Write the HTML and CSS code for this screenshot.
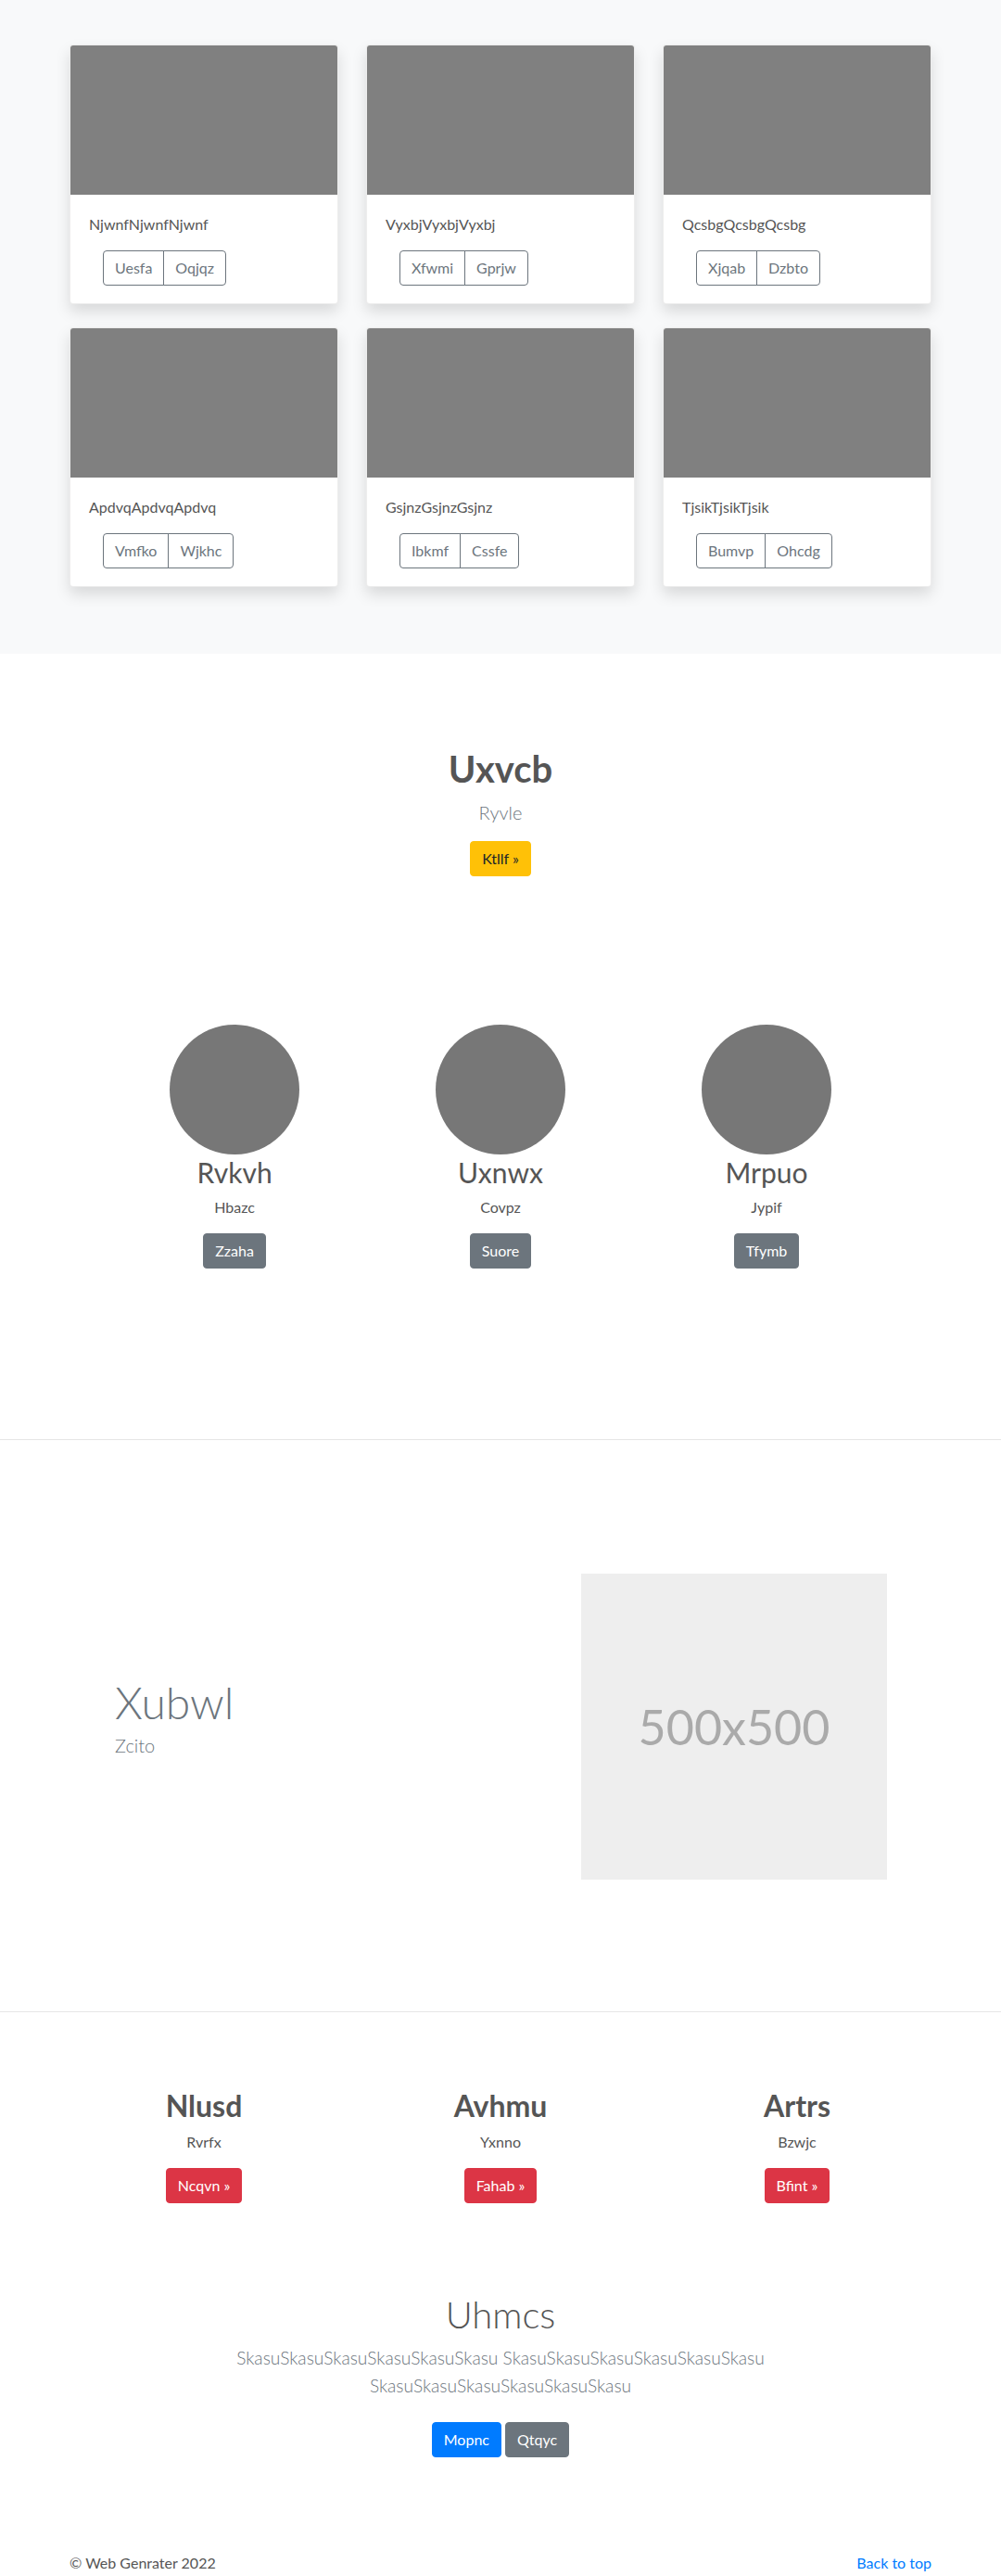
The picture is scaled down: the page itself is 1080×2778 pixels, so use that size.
FILE: index.html
```html
<!DOCTYPE html>
<html lang="en">
<head>
<meta charset="utf-8">
<title>Web Genrater</title>
<link rel="stylesheet" href="styles.css">
</head>
<body>
<section class="album">
  <div class="card-grid">
    <div class="card"><div class="card-img"></div><div class="card-body"><p class="card-text">NjwnfNjwnfNjwnf</p><div class="btn-group"><button class="btn-outline">Uesfa</button><button class="btn-outline">Oqjqz</button></div></div></div>
    <div class="card"><div class="card-img"></div><div class="card-body"><p class="card-text">VyxbjVyxbjVyxbj</p><div class="btn-group"><button class="btn-outline">Xfwmi</button><button class="btn-outline">Gprjw</button></div></div></div>
    <div class="card"><div class="card-img"></div><div class="card-body"><p class="card-text">QcsbgQcsbgQcsbg</p><div class="btn-group"><button class="btn-outline">Xjqab</button><button class="btn-outline">Dzbto</button></div></div></div>
    <div class="card"><div class="card-img"></div><div class="card-body"><p class="card-text">ApdvqApdvqApdvq</p><div class="btn-group"><button class="btn-outline">Vmfko</button><button class="btn-outline">Wjkhc</button></div></div></div>
    <div class="card"><div class="card-img"></div><div class="card-body"><p class="card-text">GsjnzGsjnzGsjnz</p><div class="btn-group"><button class="btn-outline">Ibkmf</button><button class="btn-outline">Cssfe</button></div></div></div>
    <div class="card"><div class="card-img"></div><div class="card-body"><p class="card-text">TjsikTjsikTjsik</p><div class="btn-group"><button class="btn-outline">Bumvp</button><button class="btn-outline">Ohcdg</button></div></div></div>
  </div>
</section>

<section class="feature">
  <h1 class="feature-title">Uxvcb</h1>
  <p class="feature-lead">Ryvle</p>
  <a class="btn btn-warning" href="#">Ktllf &raquo;</a>
</section>

<section class="team">
  <div class="team-grid">
    <div class="member"><div class="avatar"></div><h3 class="member-name">Rvkvh</h3><p class="member-role">Hbazc</p><a class="btn btn-secondary" href="#">Zzaha</a></div>
    <div class="member"><div class="avatar"></div><h3 class="member-name">Uxnwx</h3><p class="member-role">Covpz</p><a class="btn btn-secondary" href="#">Suore</a></div>
    <div class="member"><div class="avatar"></div><h3 class="member-name">Mrpuo</h3><p class="member-role">Jypif</p><a class="btn btn-secondary" href="#">Tfymb</a></div>
  </div>
</section>

<section class="split">
  <div class="split-inner">
    <div class="split-text">
      <h2 class="split-title">Xubwl</h2>
      <p class="split-lead">Zcito</p>
    </div>
    <div class="placeholder">500x500</div>
  </div>
</section>

<section class="trio">
  <div class="trio-grid">
    <div class="trio-item"><h2 class="trio-title">Nlusd</h2><p class="trio-text">Rvrfx</p><a class="btn btn-danger" href="#">Ncqvn &raquo;</a></div>
    <div class="trio-item"><h2 class="trio-title">Avhmu</h2><p class="trio-text">Yxnno</p><a class="btn btn-danger" href="#">Fahab &raquo;</a></div>
    <div class="trio-item"><h2 class="trio-title">Artrs</h2><p class="trio-text">Bzwjc</p><a class="btn btn-danger" href="#">Bfint &raquo;</a></div>
  </div>
</section>

<section class="jumbo">
  <div class="jumbo-inner">
    <h1 class="jumbo-title">Uhmcs</h1>
    <p class="jumbo-lead">SkasuSkasuSkasuSkasuSkasuSkasu SkasuSkasuSkasuSkasuSkasuSkasu SkasuSkasuSkasuSkasuSkasuSkasu</p>
    <div class="jumbo-actions"><a class="btn btn-primary" href="#">Mopnc</a> <a class="btn btn-secondary" href="#">Qtqyc</a></div>
  </div>
</section>

<footer class="footer">
  <div class="footer-inner">
    <p class="copy">&copy; Web Genrater 2022</p>
    <a class="top-link" href="#">Back to top</a>
  </div>
</footer>
</body>
</html>
```

FILE: styles.css
```css
* { box-sizing: border-box; }

html, body {
  margin: 0;
  padding: 0;
}

body {
  font-family: Lato, "Noto Sans", "Liberation Sans", sans-serif;
  font-size: 16px;
  line-height: 1.5;
  color: #555;
  background: #fff;
}

p { margin: 0; }
h1, h2, h3 { margin: 0; }

/* buttons */
.btn {
  display: inline-block;
  font-family: inherit;
  font-size: 16px;
  line-height: 24px;
  padding: 6px 12px;
  border: 1px solid transparent;
  border-radius: 4px;
  text-decoration: none;
  vertical-align: middle;
}
.btn-warning { background: #ffc107; border-color: #ffc107; color: #212529; }
.btn-secondary { background: #6c757d; border-color: #6c757d; color: #fff; }
.btn-danger { background: #dc3545; border-color: #dc3545; color: #fff; }
.btn-primary { background: #007bff; border-color: #007bff; color: #fff; }

/* album */
.album {
  background: #f8f9fa;
  padding: 48px 0 72px;
}
.card-grid {
  width: 930px;
  margin: 0 auto;
  display: grid;
  grid-template-columns: repeat(3, 290px);
  column-gap: 30px;
  row-gap: 25px;
}
.card {
  background: #fff;
  border: 1px solid rgba(0, 0, 0, 0.07);
  border-radius: 4px;
  box-shadow: 0 8px 16px rgba(0, 0, 0, 0.13);
  overflow: hidden;
}
.card-img {
  height: 161px;
  background: #808080;
}
.card-body {
  padding: 20px 20px 19px;
}
.card-text {
  font-size: 16px;
  line-height: 24px;
  color: #555;
  margin-bottom: 16px;
}
.btn-group {
  display: inline-flex;
  margin-left: 15px;
}
.btn-outline {
  font-family: inherit;
  font-size: 16px;
  line-height: 24px;
  padding: 6px 12px;
  background: transparent;
  color: #6c757d;
  border: 1px solid #6c757d;
  margin: 0;
}
.btn-outline:first-child { border-radius: 4px 0 0 4px; }
.btn-outline + .btn-outline { margin-left: -1px; border-radius: 0 4px 4px 0; }

/* feature */
.feature {
  padding-top: 100px;
  text-align: center;
}
.feature-title {
  font-size: 40px;
  line-height: 48px;
  font-weight: 700;
  color: #555;
  margin-bottom: 8px;
}
.feature-lead {
  font-size: 20px;
  line-height: 30px;
  font-weight: 300;
  color: #6c757d;
  margin-bottom: 16px;
}

/* team */
.team {
  padding: 160px 0 184px;
}
.team-grid {
  width: 861px;
  margin: 0 auto;
  display: grid;
  grid-template-columns: repeat(3, 1fr);
}
.member {
  display: flex;
  flex-direction: column;
  align-items: center;
  text-align: center;
}
.avatar {
  width: 140px;
  height: 140px;
  border-radius: 50%;
  background: #777;
}
.member-name {
  font-size: 30px;
  line-height: 36px;
  font-weight: 400;
  color: #555;
  margin: 1px 0 8px;
}
.member-role {
  font-size: 16px;
  line-height: 24px;
  color: #555;
  margin-bottom: 16px;
}

/* split */
.split {
  border-top: 1px solid #e6e6e6;
  border-bottom: 1px solid #e6e6e6;
  padding: 144px 0 142px;
}
.split-inner {
  width: 960px;
  margin: 0 auto;
  padding: 0 63px 0 64px;
  display: flex;
  align-items: center;
}
.split-text {
  flex: 1;
  padding-bottom: 20px;
}
.split-title {
  font-size: 48px;
  line-height: 1.2;
  font-weight: 300;
  color: #6c757d;
  margin-bottom: 3px;
}
.split-lead {
  font-size: 20px;
  line-height: 30px;
  font-weight: 300;
  color: #6c757d;
}
.placeholder {
  width: 330px;
  height: 330px;
  background: #eee;
  color: #aaa;
  font-size: 52px;
  font-weight: 400;
  display: flex;
  align-items: center;
  justify-content: center;
}

/* trio */
.trio {
  padding-top: 82px;
}
.trio-grid {
  width: 960px;
  margin: 0 auto;
  display: grid;
  grid-template-columns: repeat(3, 1fr);
  text-align: center;
}
.trio-title {
  font-size: 32px;
  line-height: 1.2;
  font-weight: 700;
  color: #555;
  margin-bottom: 8px;
}
.trio-text {
  font-size: 16px;
  line-height: 24px;
  color: #555;
  margin-bottom: 16px;
}

/* jumbo */
.jumbo {
  padding-top: 96px;
  text-align: center;
}
.jumbo-inner {
  max-width: 610px;
  margin: 0 auto;
}
.jumbo-title {
  font-size: 40px;
  line-height: 48px;
  font-weight: 300;
  color: #555;
  margin-bottom: 8px;
}
.jumbo-lead {
  font-size: 19.2px;
  line-height: 30px;
  font-weight: 300;
  color: #6c757d;
  margin-bottom: 24px;
}

/* footer */
.footer {
  padding: 102px 0 30px;
}
.footer-inner {
  width: 930px;
  margin: 0 auto;
  display: flex;
  justify-content: space-between;
  align-items: center;
}
.copy {
  color: #555;
}
.top-link {
  color: #007bff;
  text-decoration: none;
}
```
